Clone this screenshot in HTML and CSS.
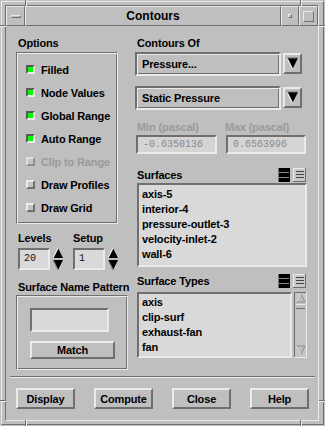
FILE: index.html
```html
<!DOCTYPE html>
<html>
<head>
<meta charset="utf-8">
<link rel="stylesheet" href="styles.css">
</head>
<body>
<div class="window">
  <div class="tick tv top" style="left:25px"></div>
  <div class="tick tv top" style="left:300px"></div>
  <div class="tick tv bottom" style="left:25px"></div>
  <div class="tick tv bottom" style="left:300px"></div>
  <div class="tick th lft" style="top:25px"></div>
  <div class="tick th rgt" style="top:25px"></div>
  <div class="tick th lft" style="top:400px"></div>
  <div class="tick th rgt" style="top:400px"></div>
  <div class="frame">
    <div class="inner">
      <div class="titlebar">
        <div class="tb-btn tb-menu"><span class="tb-bar"></span></div>
        <div class="tb-title">Contours</div>
        <div class="tb-btn tb-min"><span class="tb-dot"></span></div>
        <div class="tb-btn tb-max"><span class="tb-sq"></span></div>
      </div>
      <div class="content">
        <div class="main">
          <div class="col-left">
            <div class="label">Options</div>
            <div class="etched options">
              <div class="opt"><span class="chk on"></span><span>Filled</span></div>
              <div class="opt"><span class="chk on"></span><span>Node Values</span></div>
              <div class="opt"><span class="chk on"></span><span>Global Range</span></div>
              <div class="opt"><span class="chk on"></span><span>Auto Range</span></div>
              <div class="opt disabled"><span class="chk off dis"></span><span>Clip to Range</span></div>
              <div class="opt"><span class="chk off"></span><span>Draw Profiles</span></div>
              <div class="opt"><span class="chk off"></span><span>Draw Grid</span></div>
            </div>
            <div class="spins">
              <div class="spin-group">
                <div class="label">Levels</div>
                <div class="spin-row">
                  <div class="field num">20</div>
                  <svg class="spinner" width="10" height="22" viewBox="0 0 10 22">
                    <polygon points="5,0 10,10 0,10" fill="#000"/>
                    <polyline points="0,10 5,0" stroke="#ebebeb" stroke-width="1.2" fill="none"/>
                    <polygon points="0,12 10,12 5,22" fill="#000"/>
                    <polyline points="0,12 5,22" stroke="#8a8a8a" stroke-width="1.2" fill="none"/>
                  </svg>
                </div>
              </div>
              <div class="spin-group">
                <div class="label">Setup</div>
                <div class="spin-row">
                  <div class="field num">1</div>
                  <svg class="spinner" width="10" height="22" viewBox="0 0 10 22">
                    <polygon points="5,0 10,10 0,10" fill="#000"/>
                    <polyline points="0,10 5,0" stroke="#ebebeb" stroke-width="1.2" fill="none"/>
                    <polygon points="0,12 10,12 5,22" fill="#000"/>
                    <polyline points="0,12 5,22" stroke="#8a8a8a" stroke-width="1.2" fill="none"/>
                  </svg>
                </div>
              </div>
            </div>
            <div class="label snp">Surface Name Pattern</div>
            <div class="etched pattern">
              <div class="field pattern-input"></div>
              <div class="btn match">Match</div>
            </div>
          </div>
          <div class="col-right">
            <div class="label">Contours Of</div>
            <div class="dd-row first">
              <div class="dropdown">Pressure...</div>
              <div class="dd-arrow">
                <svg width="15" height="17" viewBox="0 0 15 17">
                  <polygon points="2,3 13,3 7.5,14" fill="#000"/>
                  <polyline points="2,3 7.5,14" stroke="#ebebeb" stroke-width="1.2" fill="none"/>
                  <polyline points="2,3 13,3" stroke="#6f6f6f" stroke-width="1" fill="none"/>
                </svg>
              </div>
            </div>
            <div class="dd-row second">
              <div class="dropdown">Static Pressure</div>
              <div class="dd-arrow">
                <svg width="15" height="17" viewBox="0 0 15 17">
                  <polygon points="2,3 13,3 7.5,14" fill="#000"/>
                  <polyline points="2,3 7.5,14" stroke="#ebebeb" stroke-width="1.2" fill="none"/>
                  <polyline points="2,3 13,3" stroke="#6f6f6f" stroke-width="1" fill="none"/>
                </svg>
              </div>
            </div>
            <div class="mm-labels">
              <span class="dis-text mm-min">Min (pascal)</span>
              <span class="dis-text mm-max">Max (pascal)</span>
            </div>
            <div class="mm-fields">
              <div class="field mono-dis min-f">-0.6350136</div>
              <div class="field mono-dis max-f">0.6563996</div>
            </div>
            <div class="list-head surf-head">
              <span>Surfaces</span>
              <span class="icons">
                <svg width="12" height="14" viewBox="0 0 12 14">
                  <rect x="0" y="0" width="12" height="14" fill="#000"/>
                  <rect x="1" y="4" width="10" height="1" fill="#8a8a8a"/>
                  <rect x="1" y="9" width="10" height="1" fill="#8a8a8a"/>
                  <rect x="0" y="0" width="1" height="14" fill="#6f6f6f"/>
                </svg>
                <svg width="13" height="14" viewBox="0 0 13 14">
                  <rect x="0" y="0" width="13" height="14" fill="#c8c8c8"/>
                  <rect x="0" y="0" width="13" height="1" fill="#ebebeb"/>
                  <rect x="0" y="0" width="1" height="14" fill="#ebebeb"/>
                  <rect x="12" y="0" width="1" height="14" fill="#6f6f6f"/>
                  <rect x="0" y="13" width="13" height="1" fill="#6f6f6f"/>
                  <rect x="3" y="3" width="8" height="1" fill="#444"/>
                  <rect x="3" y="6" width="8" height="1" fill="#444"/>
                  <rect x="3" y="9" width="8" height="1" fill="#444"/>
                </svg>
              </span>
            </div>
            <div class="list surf-list">
              <div>axis-5</div>
              <div>interior-4</div>
              <div>pressure-outlet-3</div>
              <div>velocity-inlet-2</div>
              <div>wall-6</div>
            </div>
            <div class="list-head types-head">
              <span>Surface Types</span>
              <span class="icons">
                <svg width="12" height="14" viewBox="0 0 12 14">
                  <rect x="0" y="0" width="12" height="14" fill="#000"/>
                  <rect x="1" y="4" width="10" height="1" fill="#8a8a8a"/>
                  <rect x="1" y="9" width="10" height="1" fill="#8a8a8a"/>
                  <rect x="0" y="0" width="1" height="14" fill="#6f6f6f"/>
                </svg>
                <svg width="13" height="14" viewBox="0 0 13 14">
                  <rect x="0" y="0" width="13" height="14" fill="#c8c8c8"/>
                  <rect x="0" y="0" width="13" height="1" fill="#ebebeb"/>
                  <rect x="0" y="0" width="1" height="14" fill="#ebebeb"/>
                  <rect x="12" y="0" width="1" height="14" fill="#6f6f6f"/>
                  <rect x="0" y="13" width="13" height="1" fill="#6f6f6f"/>
                  <rect x="3" y="3" width="8" height="1" fill="#444"/>
                  <rect x="3" y="6" width="8" height="1" fill="#444"/>
                  <rect x="3" y="9" width="8" height="1" fill="#444"/>
                </svg>
              </span>
            </div>
            <div class="types-row">
              <div class="list types-list">
                <div>axis</div>
                <div>clip-surf</div>
                <div>exhaust-fan</div>
                <div>fan</div>
              </div>
              <svg class="scrollbar" width="13" height="66" viewBox="0 0 13 66">
                <rect x="0" y="0" width="13" height="66" fill="#c4c4c4"/>
                <rect x="0" y="0" width="13" height="1" fill="#6f6f6f"/>
                <rect x="0" y="0" width="1" height="66" fill="#6f6f6f"/>
                <rect x="12" y="0" width="1" height="66" fill="#ebebeb"/>
                <rect x="0" y="65" width="13" height="1" fill="#ebebeb"/>
                <polygon points="6.5,2 11,10 2,10" fill="#bfbfbf" stroke="#8a8a8a" stroke-width="1"/>
                <polyline points="2,10 6.5,2" stroke="#ebebeb" stroke-width="1" fill="none"/>
                <rect x="2" y="12" width="9" height="5" fill="#bfbfbf"/>
                <rect x="2" y="12" width="9" height="1" fill="#ebebeb"/>
                <rect x="2" y="16" width="9" height="1" fill="#6f6f6f"/>
                <polygon points="2,54 11,54 6.5,63" fill="#bfbfbf" stroke="#8a8a8a" stroke-width="1"/>
                <polyline points="2,54 6.5,63" stroke="#ebebeb" stroke-width="1" fill="none"/>
              </svg>
            </div>
          </div>
        </div>
        <div class="sep"></div>
        <div class="buttons">
          <div class="btn">Display</div>
          <div class="btn">Compute</div>
          <div class="btn">Close</div>
          <div class="btn">Help</div>
        </div>
      </div>
    </div>
  </div>
</div>
</body>
</html>
```
FILE: styles.css
```css
* { box-sizing: border-box; margin: 0; padding: 0; }
html, body { width: 325px; height: 426px; overflow: hidden; background: #bfbfbf; }
body {
  font-family: "Liberation Sans", Arial, sans-serif;
  font-weight: bold;
  font-size: 11px;
  letter-spacing: -0.15px;
  color: #000;
}
.window { position: relative; width: 325px; height: 426px; padding: 1px; background: #bfbfbf; }
.frame {
  width: 323px; height: 424px;
  border: 1px solid; border-color: #ebebeb #6f6f6f #6f6f6f #ebebeb;
  padding: 3px 4px 3px 3px;
}
.inner {
  width: 314px; height: 416px;
  border: 1px solid; border-color: #6f6f6f #ebebeb #ebebeb #6f6f6f;
  display: flex; flex-direction: column;
}
.tick { position: absolute; }
.tv { width: 2px; height: 6px; border-left: 1px solid #6f6f6f; border-right: 1px solid #ebebeb; }
.tv.top { top: 0; }
.tv.bottom { bottom: 0; }
.th { height: 2px; width: 6px; border-top: 1px solid #6f6f6f; border-bottom: 1px solid #ebebeb; }
.th.lft { left: 0; }
.th.rgt { right: 0; }

.titlebar { display: flex; height: 20px; flex: none; }
.tb-btn, .tb-title {
  border: 1px solid; border-color: #ebebeb #6f6f6f #6f6f6f #ebebeb;
  display: flex; align-items: center; justify-content: center;
}
.tb-menu { width: 19px; }
.tb-min { width: 18px; }
.tb-max { width: 19px; }
.tb-title { flex: 1; font-size: 12px; letter-spacing: 0; }
.tb-bar { width: 10px; height: 3px; background: #bfbfbf; border: 1px solid; border-color: #ebebeb #6f6f6f #6f6f6f #ebebeb; }
.tb-dot { width: 4px; height: 4px; background: #bfbfbf; border: 1px solid; border-color: #ebebeb #6f6f6f #6f6f6f #ebebeb; }
.tb-sq { width: 11px; height: 11px; border: 1px solid; border-color: #ebebeb #6f6f6f #6f6f6f #ebebeb; }

.content { flex: 1; display: flex; flex-direction: column; padding-top: 10px; }
.main { display: flex; gap: 7px; padding: 0 11px 0 10px; }
.col-left { width: 112px; display: flex; flex-direction: column; }
.col-right { width: 172px; display: flex; flex-direction: column; }
.label { height: 14px; line-height: 14px; padding-left: 2px; white-space: nowrap; }

.etched {
  border: 1px solid; border-color: #6f6f6f #ebebeb #ebebeb #6f6f6f;
  box-shadow: inset 1px 1px 0 #ebebeb, inset -1px -1px 0 #6f6f6f;
}
.options { width: 102px; height: 172px; margin-top: 2px; padding: 5px 0 4px 0; }
.opt { height: 23px; display: flex; align-items: center; padding-left: 9px; gap: 6px; white-space: nowrap; }
.chk { width: 9px; height: 9px; flex: none; border: 2px solid; }
.chk.on { background: #00ff00; border-color: #5a5a5a #ebebeb #ebebeb #5a5a5a; }
.chk.off { background: #c4c4c4; border-color: #ebebeb #6f6f6f #6f6f6f #ebebeb; }
.chk.dis { background: #c4c4c4; border-color: #dedede #909090 #909090 #dedede; }
.opt.disabled { color: #9a9a9a; }

.field {
  border: 2px solid; border-color: #6f6f6f #ebebeb #ebebeb #6f6f6f;
  background: #d9d9d9;
}
.spins { display: flex; gap: 10px; padding-left: 2px; margin-top: 7px; }
.spin-group { display: flex; flex-direction: column; }
.spin-group .label { padding-left: 0; }
.spin-row { display: flex; gap: 3px; margin-top: 3px; }
.num {
  width: 32px; height: 22px; font-family: "Liberation Mono", "Courier New", monospace;
  font-weight: normal; font-size: 10px; letter-spacing: 0; line-height: 18px; padding-left: 4px; color: #111;
}
.snp { margin-top: 10px; }
.pattern { width: 112px; height: 75px; margin-top: 1px; padding: 12px 0 0 13px; display: flex; flex-direction: column; }
.pattern-input { width: 79px; height: 24px; }
.btn {
  border: 2px solid; border-color: #ebebeb #6f6f6f #6f6f6f #ebebeb;
  display: flex; align-items: center; justify-content: center;
  width: 59px; height: 21px; white-space: nowrap;
}
.match { width: 85px; height: 18px; margin-top: 9px; }

.dd-row { display: flex; align-items: flex-start; gap: 2px; }
.dd-row.first { margin-top: 2px; }
.dd-row.second { margin-top: 10px; }
.dropdown {
  width: 146px; height: 24px; border: 2px solid; border-color: #6f6f6f #ebebeb #ebebeb #6f6f6f;
  box-shadow: inset 1px 1px 0 #ebebeb, inset -1px -1px 0 #6f6f6f;
  display: flex; align-items: center; padding-left: 5px;
}
.dd-arrow {
  width: 19px; height: 21px; margin-top: 1px; border: 2px solid;
  border-color: #ebebeb #6f6f6f #6f6f6f #ebebeb; display: flex;
}
.mm-labels { display: flex; margin-top: 10px; height: 14px; line-height: 14px; }
.dis-text { color: #9a9a9a; white-space: nowrap; }
.mm-min { padding-left: 2px; width: 90px; }
.mm-fields { display: flex; gap: 9px; margin-top: 1px; padding-left: 1px; }
.mono-dis {
  height: 19px; font-family: "Liberation Mono", "Courier New", monospace; font-weight: normal;
  font-size: 10px; letter-spacing: 0; color: #8a8a8a; line-height: 15px; padding-left: 5px; background: #d4d4d4;
}
.min-f { width: 81px; }
.max-f { width: 80px; }
.list-head { display: flex; align-items: center; height: 14px; padding-left: 2px; padding-right: 1px; }
.surf-head { margin-top: 14px; }
.types-head { margin-top: 7px; }
.icons { margin-left: auto; display: flex; gap: 3px; }
.icons svg { display: block; }
.list {
  border: 2px solid; border-color: #6f6f6f #ebebeb #ebebeb #6f6f6f;
  background: #d9d9d9; line-height: 15px; padding-left: 3px;
}
.surf-list { margin-top: 1px; margin-left: 2px; height: 84px; padding-top: 2px; }
.types-row { display: flex; gap: 2px; margin-top: 4px; margin-left: 2px; }
.types-list { width: 155px; height: 66px; padding-top: 1px; }
.scrollbar { display: block; }

.sep { height: 2px; margin: 6px 3px 0 4px; border-top: 1px solid #6f6f6f; border-bottom: 1px solid #ebebeb; }
.buttons { display: flex; gap: 19px; padding-left: 10px; margin-top: 10px; }
```
